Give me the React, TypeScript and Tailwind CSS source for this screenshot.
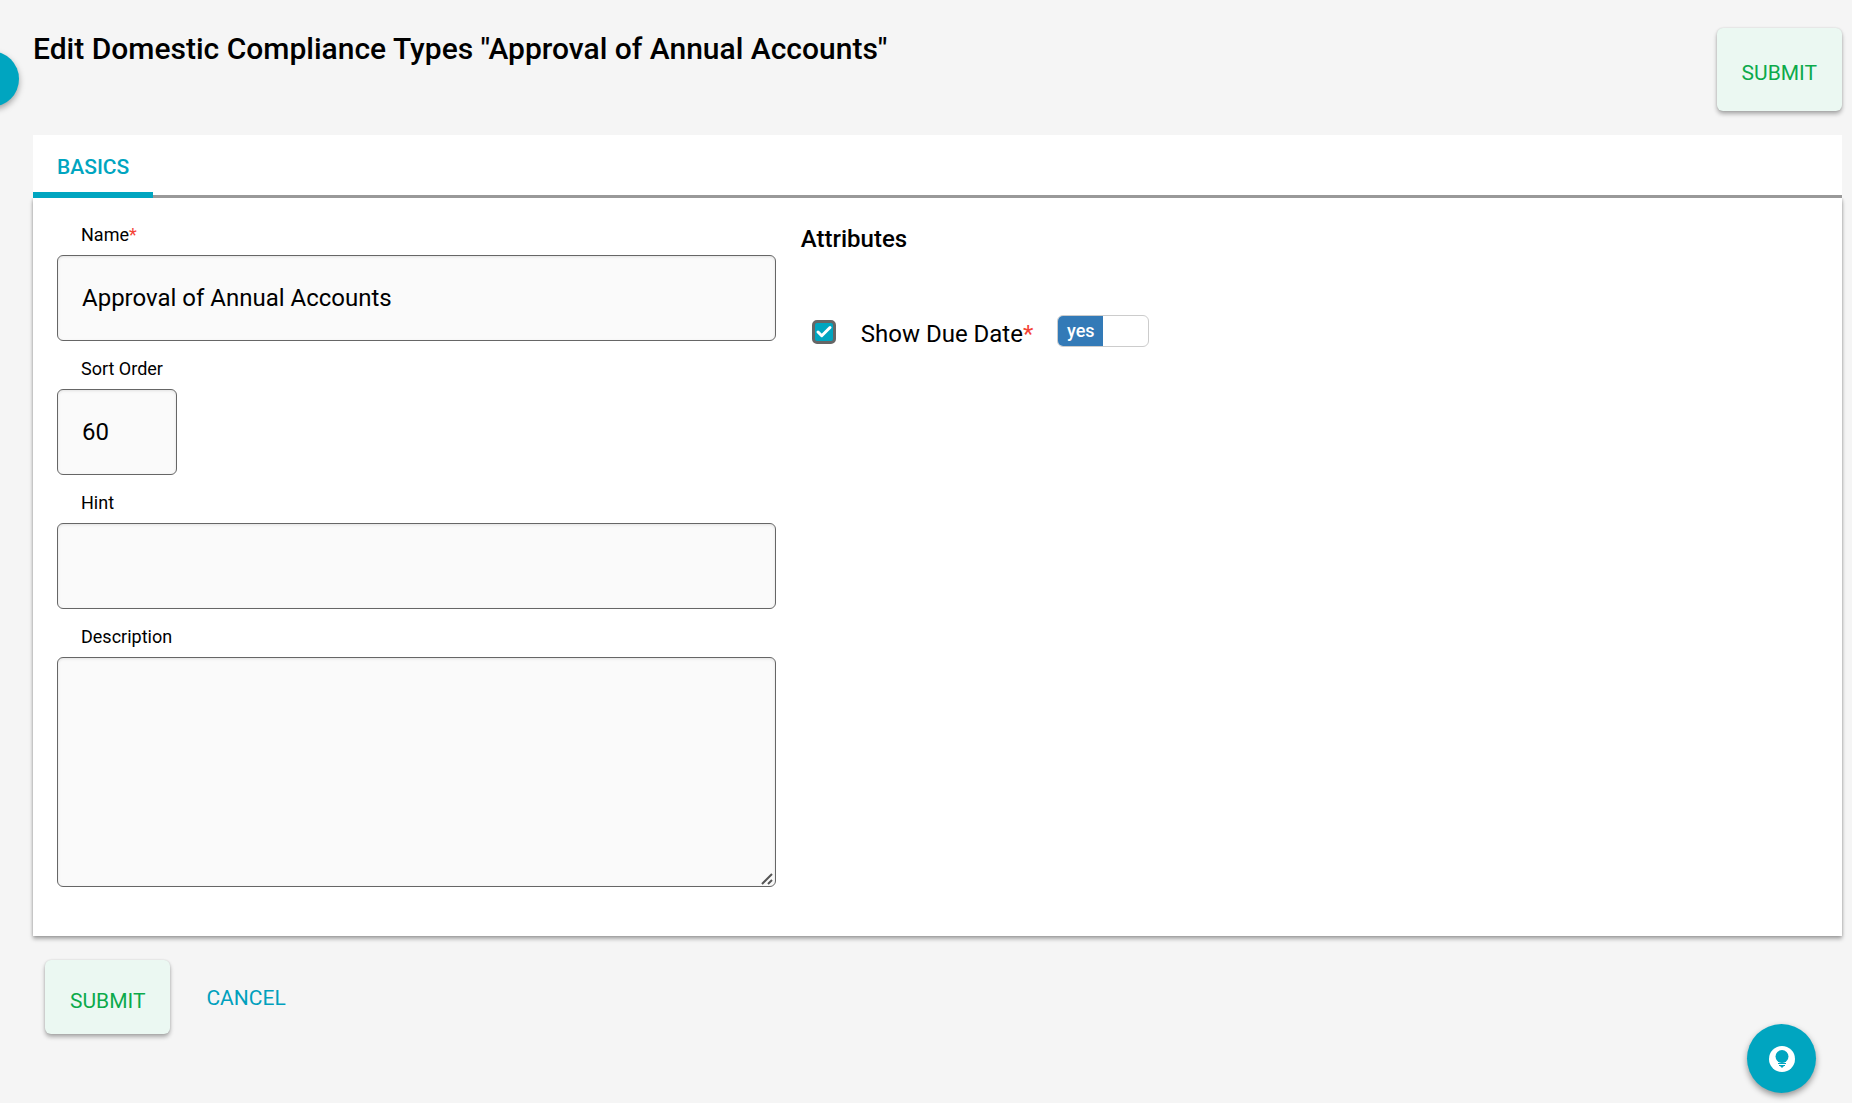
import { useState } from 'react'
import { Check } from 'lucide-react'

interface ComplianceType {
  name: string
  sortOrder: string
  hint: string
  description: string
}

const inputClass =
  'block rounded-[6px] border border-[#666] bg-[#fafafa] px-6 text-2xl text-black shadow-[inset_0_1px_3px_rgba(0,0,0,0.1)] outline-none'
const labelClass = 'block h-12 pl-6 pt-4 text-lg leading-6 w-fit'
const submitClass =
  'rounded-[6px] bg-[#ebf8f2] px-[25px] text-[21px] text-[#0caa4b] shadow-[0_3px_4px_rgba(0,0,0,0.3),0_0_2px_rgba(0,0,0,0.15)]'

export default function App() {
  const [form, setForm] = useState<ComplianceType>({
    name: 'Approval of Annual Accounts',
    sortOrder: '60',
    hint: '',
    description: '',
  })
  const [showAttribute, setShowAttribute] = useState(true)
  const [dueDate, setDueDate] = useState(true)

  const update = (field: keyof ComplianceType, value: string) => {
    setForm((prev) => ({ ...prev, [field]: value }))
  }

  return (
    <div className="min-h-screen bg-[#f5f5f5] font-['Roboto',sans-serif] text-black">
      {/* Menu handle */}
      <button
        type="button"
        aria-label="Open menu"
        className="fixed -left-[37px] top-[51px] size-14 rounded-full bg-[#00a5c0] shadow-[0_3px_6px_rgba(0,0,0,0.35)]"
      />

      <form
        className="pl-[33px] pr-[10px]"
        onSubmit={(e) => e.preventDefault()}
      >
        <header className="flex h-[135px] items-start justify-between pt-7">
          <h1 className="text-[30px] font-medium leading-[42px]">
            Edit Domestic Compliance Types "Approval of Annual Accounts"
          </h1>
          <button type="submit" className={`${submitClass} h-[83px] pt-2`}>
            SUBMIT
          </button>
        </header>

        {/* Tabs */}
        <nav className="flex h-[63px] bg-white shadow-[inset_0_-3px_0_#999]">
          <a
            href="#basics"
            className="border-b-6 border-[#00a5c0] px-6 pt-[17px] text-[21px] font-medium text-[#00a5c0]"
          >
            BASICS
          </a>
        </nav>

        <section
          id="basics"
          className="flex bg-white pb-[49px] pl-6 shadow-[0_3px_4px_rgba(0,0,0,0.3),0_0_3px_rgba(0,0,0,0.2)] [clip-path:inset(0_-8px_-8px_-8px)]"
        >
          <div className="w-5/12 pr-[25px] pt-[9px]">
            <label htmlFor="name" className={labelClass}>
              Name<span className="text-[#f44336]">*</span>
            </label>
            <input
              id="name"
              type="text"
              required
              value={form.name}
              onChange={(e) => update('name', e.target.value)}
              className={`${inputClass} h-[86px] w-full`}
            />

            <label htmlFor="sort-order" className={labelClass}>
              Sort Order
            </label>
            <input
              id="sort-order"
              type="text"
              value={form.sortOrder}
              onChange={(e) => update('sortOrder', e.target.value)}
              className={`${inputClass} h-[86px] w-[120px]`}
            />

            <label htmlFor="hint" className={labelClass}>
              Hint
            </label>
            <input
              id="hint"
              type="text"
              value={form.hint}
              onChange={(e) => update('hint', e.target.value)}
              className={`${inputClass} h-[86px] w-full`}
            />

            <label htmlFor="description" className={labelClass}>
              Description
            </label>
            <div className="relative">
              <textarea
                id="description"
                value={form.description}
                onChange={(e) => update('description', e.target.value)}
                className={`${inputClass} h-[230px] w-full resize-y py-6 [&::-webkit-resizer]:bg-transparent`}
              />
              <svg
                width="12"
                height="12"
                viewBox="0 0 12 12"
                stroke="#555"
                strokeWidth="2"
                className="pointer-events-none absolute bottom-[2px] right-[3px]"
                aria-hidden="true"
              >
                <path d="M1 11 11 1M7 11 11 7" />
              </svg>
            </div>
          </div>

          <div className="flex-1 pr-6 pt-[25px]">
            <h2 className="text-2xl font-medium leading-8">Attributes</h2>

            <div className="mt-[59px] flex items-center pl-[11px]">
              <span className="relative flex size-6">
                <input
                  id="show-due-date"
                  type="checkbox"
                  checked={showAttribute}
                  onChange={(e) => setShowAttribute(e.target.checked)}
                  className="size-6 appearance-none rounded-[5px] border-3 border-[#666] checked:bg-[#00a5c0]"
                />
                {showAttribute && (
                  <Check
                    size={18}
                    strokeWidth={4}
                    className="pointer-events-none absolute left-[3px] top-[3px] text-white"
                  />
                )}
              </span>
              <label htmlFor="show-due-date" className="pl-[25px] pt-1 text-2xl">
                Show Due Date<span className="text-[#f44336]">*</span>
              </label>
              <button
                type="button"
                role="switch"
                aria-checked={dueDate}
                aria-label="Due date"
                onClick={() => setDueDate(!dueDate)}
                className="mb-0.5 ml-6 flex h-8 w-[92px] overflow-hidden rounded-[6px] border border-[#ccc] bg-white text-lg font-medium"
              >
                {dueDate ? (
                  <span className="h-full w-1/2 bg-[#337ab7] leading-[30px] text-white">
                    yes
                  </span>
                ) : (
                  <span className="ml-auto h-full w-1/2 leading-[30px]">no</span>
                )}
              </button>
            </div>
          </div>
        </section>

        {/* Actions */}
        <div className="flex items-center gap-9 pb-6 pl-3 pt-6">
          <button type="submit" className={`${submitClass} h-[74px] pt-2.5`}>
            SUBMIT
          </button>
          <a href="#cancel" className="pt-1 text-[21px] text-[#00a0bd]">
            CANCEL
          </a>
        </div>
      </form>

      {/* Help */}
      <button
        type="button"
        aria-label="Help"
        className="fixed bottom-[10px] right-9 flex size-[69px] items-center justify-center rounded-full bg-[#00a5c0] shadow-[0_3px_6px_rgba(0,0,0,0.4)]"
      >
        <svg width="26" height="26" viewBox="0 0 26 26" aria-hidden="true">
          <circle cx="13" cy="13" r="13" fill="#fff" />
          <g fill="#00a5c0">
            <circle cx="13" cy="10.5" r="6.5" />
            <path d="M9 14h8v2H9zM9 17h8v1H9zM10 19h6v1h-6zM11 20h4l-2 2z" />
          </g>
        </svg>
      </button>
    </div>
  )
}
